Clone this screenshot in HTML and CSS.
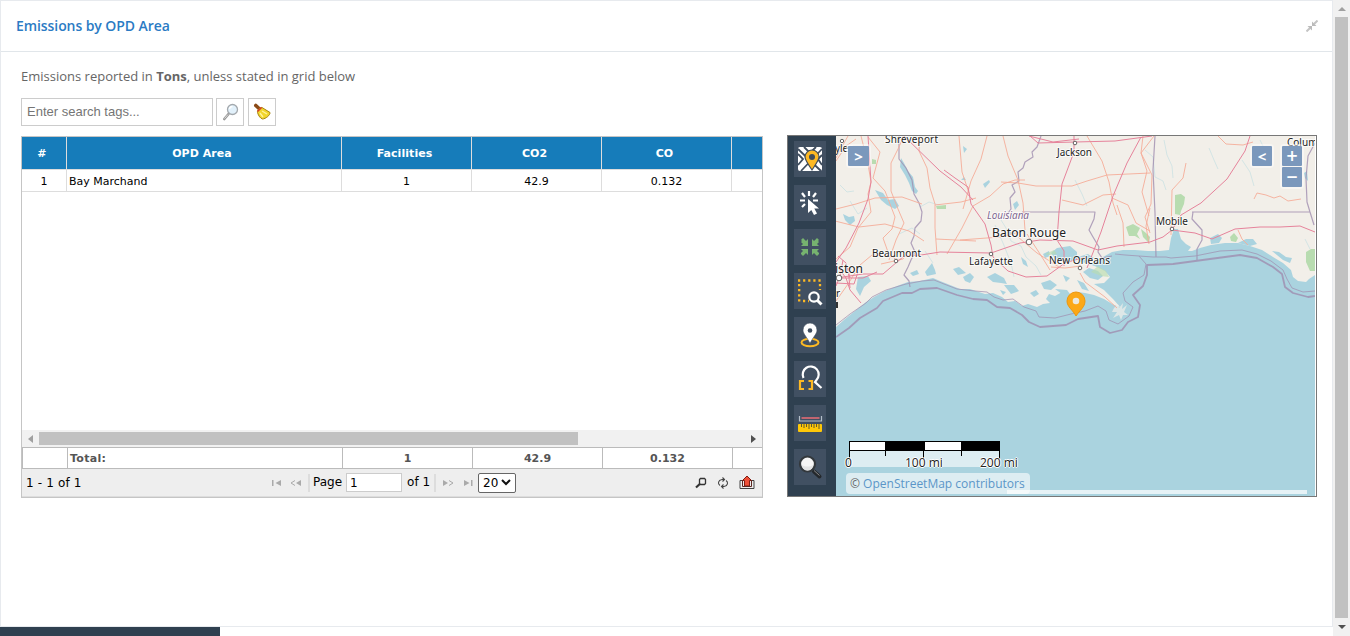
FILE: index.html
```html
<!DOCTYPE html>
<html lang="en">
<head>
<meta charset="utf-8">
<title>Emissions by OPD Area</title>
<link rel="stylesheet" href="styles.css">
</head>
<body>
<div class="app">
  <div class="main">
    <section class="panel">
      <header class="panel-head">
        <h1 class="panel-title">Emissions by OPD Area</h1>
        <svg class="collapse" width="12" height="12" viewBox="0 0 12 12"><path d="M0.500 11.500 4 8M11.500 .5 8 4" stroke="#c4c4c4" stroke-width="2"/><path d="M1.500 6H6v4.500zM10.500 6H6V1.500z" fill="#bbb"/></svg>
      </header>
      <div class="panel-body">
        <div class="left">
          <p class="note">Emissions reported in <b>Tons</b>, unless stated in grid below</p>
          <div class="search">
            <input class="search-input" placeholder="Enter search tags...">
            <button class="tool find"><svg width="18" height="18" viewBox="0 0 18 18"><path d="M3.300 16 7.500 11" stroke="#999" stroke-width="2.600" stroke-linecap="round"/><path d="M3.500 15.500 7 11.500" stroke="#ddd" stroke-width="1"/><circle cx="11.500" cy="6.500" r="5" fill="#e2f1fb" stroke="#a4a9ae" stroke-width="1.300"/><path d="M8.500 6a3 3 0 0 1 3-2.500" stroke="#fff" stroke-width="1.500" fill="none"/></svg></button>
            <button class="tool"><svg width="18" height="18" viewBox="0 0 18 18"><path d="M2.800 2.500 5.500 5" stroke="#8b4a16" stroke-width="3.600" stroke-linecap="round"/><path d="M4.500 9.500C4 7 7 4 9 4.500l8 5c.5 2.500-4.500 6.500-7.500 6.500-2-.5-4-3-5-6.500z" fill="#f1d52c" stroke="#a8850f"/><path d="M4.500 8.500 8.500 4.500" stroke="#d5382a" stroke-width="1.600"/><path d="M9 8 14 11M7 10l3 4" stroke="#fff19a" stroke-width="1.400"/></svg></button>
          </div>
          <div class="grid">
            <div class="row head"><span class="num">#</span><span class="area">OPD Area</span><span>Facilities</span><span>CO2</span><span>CO</span><span class="rest"></span></div>
            <div class="row data"><span class="num">1</span><span class="area">Bay Marchand</span><span>1</span><span>42.9</span><span>0.132</span><span class="rest"></span></div>
            <div class="space"></div>
            <div class="hscroll"><i class="arrow left-arrow"></i><i class="hthumb"></i><i class="arrow right-arrow"></i></div>
            <div class="row total"><span class="num"></span><span class="area">Total:</span><span>1</span><span>42.9</span><span>0.132</span><span class="rest"></span></div>
            <div class="pager">
              <span class="range">1 - 1 of 1</span>
              <div class="pages">
                <svg width="32" height="10" viewBox="0 0 32 10" fill="#aaa"><path d="M1 2h1.500v6H1zM10 2v6L4.500 5z"/><path d="M24 2.500 20 5l4 2.500" fill="none" stroke="#aaa"/><path d="M30 2v6l-5-3z"/></svg>
                <i class="sep"></i><span class="word">Page</span><input class="page-input" value="1"><span class="word">of 1</span><i class="sep sep-right"></i>
                <svg width="32" height="10" viewBox="0 0 32 10" fill="#aaa"><path d="M1 2v6l5-3z"/><path d="M7 2.500 11 5 7 7.500" fill="none" stroke="#aaa"/><path d="M22 2v6l5.500-3zM29 2h1.500v6H29z"/></svg>
                <span class="select">20<svg width="10" height="7" viewBox="0 0 10 7"><path d="m1 1 4 4 4-4" fill="none" stroke="#111" stroke-width="2"/></svg></span>
              </div>
              <div class="actions">
                <svg width="12" height="12" viewBox="0 0 12 12" fill="none" stroke="#333"><path d="M4.500 2.500 5.500 1.500h4l1 1v4L9.500 7.500h-4l-1-1z" stroke-width="1.300"/><path d="M1 10.500 4.800 7" stroke-width="2.200"/></svg>
                <svg width="12" height="12" viewBox="0 0 12 12" fill="none" stroke="#444" stroke-width="1.100"><path d="M3 8.500C.5 7 1 3 5 2.500h2M5.500.5l2 2-2 2M9 3.500C11.500 5 11 9 7 9.500H5M6.500 7.500l-2 2 2 2"/></svg>
                <svg width="16" height="16" viewBox="0 0 16 16"><path d="M4 5.500H1v8h14v-8h-3" fill="none" stroke="#444"/><path d="M8 1 3.500 5.500h2V11h5V5.500h2z" fill="#ee5038" stroke="#7f1c12"/><path d="M3.500 6v5.500h9V6" fill="none" stroke="#5a2620"/></svg>
              </div>
            </div>
          </div>
        </div>
        <div class="map-frame">
          <nav class="map-tools">
            <button><svg viewBox="0 0 32 36"><rect x="4" y="6" width="24" height="24" rx="2" fill="#fff"/><path d="M4 8 27 30M28 8 7 30M10 6l6 6 6-6M4 13l5 5-5 6M28 14l-4 4 4 6" stroke="#3f4d5e" stroke-width="1.800" fill="none"/><path d="M18 29c-4-6-7-10-7-13a7 7 0 0 1 14 0c0 3-3 7-7 13z" fill="#fdb924" stroke="#3f4d5e" stroke-width="1.200"/><circle cx="18" cy="16" r="3" fill="#3f4d5e"/></svg></button>
            <button><svg viewBox="0 0 32 36"><path d="M15 6v5M8 8l3 4M22 8l-3 4M6 15.500h5M19 15.500h5M8 22l3-3" stroke="#fff" stroke-width="2.200"/><path d="M14 14v14l3.300-3 2.700 5 3-1.500-2.700-5H25z" fill="#fff"/></svg></button>
            <button><svg viewBox="0 0 32 36" fill="#76b36f"><path d="M7 11l2-2 3 3 2-2v7H7l2-2-2-2 1-1zM25 11l-2-2-3 3-2-2v7h7l-2-2 2-2-1-1zM7 25l2 2 3-3 2 2v-6H7l2 2-2 2zM25 25l-2 2-3-3-2 2v-6h7l-2 2 2 2z"/></svg></button>
            <button><svg viewBox="0 0 32 36"><path d="M4 7.500h23M5.200 11v18M26 11v6M9 28h6" fill="none" stroke="#fdb924" stroke-width="2.300" stroke-dasharray="2.200 2.900"/><circle cx="20" cy="24" r="4.700" fill="none" stroke="#fff" stroke-width="2.200"/><path d="m23.500 27.500 4 4" stroke="#fff" stroke-width="3"/></svg></button>
            <button><svg viewBox="0 0 32 36"><ellipse cx="16" cy="25.500" rx="8.500" ry="3.700" fill="none" stroke="#fdb924" stroke-width="2"/><path d="M16 26.500C13 20 9 17 9 13a7 7 0 0 1 14 0c0 4-4 7-7 13.500z" fill="#fff" stroke="#3f4d5e" stroke-width=".6"/><circle cx="16" cy="13.500" r="2.300" fill="#3f4d5e"/></svg></button>
            <button><svg viewBox="0 0 32 36" fill="none"><path d="M9.500 17A8 8 0 1 1 22.500 19l-1.500 2 6.500 6" stroke="#fff" stroke-width="2.200"/><path d="M10 20H6v8h4M14.500 20H18v8h-3.500" stroke="#fdb924" stroke-width="2.200"/></svg></button>
            <button><svg viewBox="0 0 32 36"><path d="M5.500 11v5h22v-5" fill="none" stroke="#b4bec8" stroke-width="1.200"/><path d="M7.500 13h18" stroke="#ee6d76" stroke-width="1.500"/><rect x="4" y="19" width="24" height="8" rx="1" fill="#ffc808"/><path d="M7.500 19v3M10 19v4M12.500 19v3M15 19v5M17.500 19v3M20 19v4M22.500 19v3M25 19v5" stroke="#655a2e"/></svg></button>
            <button><svg viewBox="0 0 32 36"><path d="m20 22.500 5.500 5" stroke="#24282c" stroke-width="4" stroke-linecap="round"/><path d="m20 21.500 5.500 5" stroke="#888"/><circle cx="13.500" cy="15" r="7.500" fill="#f5f5f5" stroke="#33383c" stroke-width="2.200"/><path d="M8 16a5.500 5.500 0 0 0 11 0c-3 2-8 2-11 0z" fill="#e2e3e4"/></svg></button>
          </nav>
          <div class="map">
            <svg class="tiles" viewBox="836 136 479 360" width="479" height="360">
              <rect x="836" y="136" width="479" height="360" fill="#aad3df"/>
              <path class="land" d="M836 136H1315V275L1309 279 1306 282 1298 281 1293 277 1291 270 1283 263 1273 257 1262 250 1250 246 1238 243 1225 243 1211 245 1200 248 1192 251 1188 251 1191 247 1186 244 1181 239 1178 229 1174 229 1171 238 1169 250 1160 251 1148 251 1135 250 1123 250 1112 252 1103 257 1096 260 1089 264 1097 267 1105 271 1110 277 1104 283 1094 284 1104 290 1113 299 1120 307 1114 305 1104 299 1094 295 1085 293 1078 292 1070 294 1062 292 1055 296 1049 294 1046 299 1050 303 1043 304 1037 307 1028 304 1022 306 1015 301 1008 302 1002 297 993 293 985 294 979 292 970 289 960 289 950 285 940 281 933 278 920 281 908 282 897 286 885 291 874 297 866 302 855 311 845 319 836 327z"/>
              <path d="M1114 308l4-4 1 4 4-5-1 6 5-4-3 7 4 3-5 0-2 5-2-5-6 3 4-6-5 0z" fill="#f2efe9" opacity=".7"/>
              <!-- bays, lakes and wetlands -->
              <g fill="#aad3df">
                <path d="m1051 253 6-5 13-2 7 6 0 7-9 3-12-2zM1043 254l6-3 1 5-5 2zM1078 257l10-3 6 4-8 5-8-1zM1083 272l6-4 9 3 5 5-5 4-8-2zM858 277l10-1 3 5-7 6-4 9-4-7zM925 272l7-9 3 7 1 4-9 2zM910 273l7-3 2 4-6 2zM953 269l6-2 7 6-8 2zM963 277l7-4 4 4-4 6-5-2zM987 277l8-4 9 5 3 6-6-1-8-1zM1004 285l10 0 5 6-8 3zM1041 283l9-3 7 5-6 5-7-1zM1055 289l12 1 3 4-8 0zM1077 280l7 3 5 8-7-2zM875 190l8 3 5 7 7-1 4 7-4 3-8-4-6-5zM843 214l6 3 5-1 1 5-5 4-5-5zM901 158l3 5 4 8 5 6 2 10 3 4-2 3-4-3-3-8-4-8-5-8zM1210 238l8-4 4 4-3 5-8 1zM1238 243l8-4 7 0 4 5-7 2zM1272 251l7 1 7 5 6 1-2 5-7-3zM1013 204l4-3 2 4-4 5zM983 184l6-4 1 2-5 6z"/>
                <path d="m963 146 4 3-3 4zM1008 229l4 4-3 3zM961 180l3-3 2 3zM1021 257l5 4 2 6-5-3zM1304 173l3-2 1 10-3-3zM1063 275l7 3-4 4zM1094 261l6 1-3 5zM1030 293l6-3 3 4-5 3zM1000 290l6 2-3 3z"/>
              </g>
              <g fill="#b8dcb0">
                <path d="m1175 195 6-1 4 3-1 7-3 7-1 4-5-1zM1126 227l7-3 7 4-3 6 3 5-5-3-6 0zM1306 252l5-3h4v22h-5l-4-9zM1230 237l4-4 4 5-2 4-5-1zM1141 229l5 4 4 4-1 6-6-6zM872 159l4 1v4h-4zM936 206l10-1 0 4-9 0z"/>
                <path d="m1045 254 9-4 3 4-9 1zM1091 272l7-6 8 5 3 6-8-1z" opacity=".65"/>
              </g>
              <g class="stream">
                <path d="M1001 220l5 8 5 13 10 5 5 11 10 9 5 9M995 225l8 18 8 20 3 14M1145 150l8 7 2 20 8 4 3 9M1164 140l3 15 5 11 1 12M1242 160l8 12 4 14M1075 180l7 14 5 12M840 185l7 7 7-1M850 201l8 13 9-6M920 207l9-5 10 3M899 234l13-6 8 6M925 251l8 12M1305 239l5 10M1260 140l6 12 1 12M1209 148l5 12 4 9"/>
              </g>
              <g class="border">
                <path d="M899 136V159L906 168 912 180 914 194 919 203 922 212 921 221 915 228 914 236 911 243 915 252 911 260 908 267 904 275 909 281 910 287M1041 136L1037 147 1032 152 1033 157 1025 162 1023 168 1018 172 1019 181 1012 185 1015 192 1010 198 1011 209 1006 216M1022 212H1095L1094 219 1089 230 1093 237 1099 247 1098 252 1102 258 1112 256M1155 136L1153 170 1155 213 1156 257M1192 212H1310L1314 225M1193 212L1192 219 1202 230 1202 240 1197 249 1197 261M1315 143L1308 156 1306 178 1307 202 1310 212"/>
                <path d="M836 325L850 314 866 303 872 297 886 290 906 284 922 281 934 280 944 284 957 289 975 291 987 292 994 297 1003 300 1013 299 1024 307 1036 311 1039 317 1055 318 1071 314 1085 311 1098 306 1106 311 1109 320 1118 324 1129 316 1133 307 1125 301 1123 293 1133 282 1144 275 1146 264 1139 256 1125 255 1115 254M1139 256L1153 257 1166 257 1171 258 1195 256 1220 251 1242 250 1257 254 1271 261 1283 270 1287 279 1292 288 1303 292 1315 291" stroke-width=".9"/>
                <path class="maritime" d="M836 337L849 328 860 318 877 308 883 301 902 293 912 293 920 289 937 288 957 295 973 299 987 300 997 307 1010 308 1022 315 1029 322 1040 327 1066 325 1078 319 1098 316 1100 327 1110 333 1122 330 1128 322 1138 317 1140 305 1133 295 1143 286 1147 275 1147 265 1173 264 1210 259 1240 255 1257 258 1273 267 1282 274 1285 287 1293 293 1308 297 1315 296"/>
              </g>
              <g class="road orange">
                <path d="M848 136l-9 16-3 6M836 161l10-15 10-7M861 136l7 28 3 18-3 12 3 18-13 16-8 19-14 12M868 137l12 15-7 26 12 13 10 26-3 12-9 9 5 14 9 9M904 136l-6 13-7 14 0 28 7 18 6 14-8 17-7 20M920 136l-1 15 8 17 3 20 5 16 0 24 2 27M836 209l20-5 19-6 27-1 20 7M835 221l24 6 26-3 24 7 15 10M935 205l26-3 15-4M936 239l40 2M947 254l15-26 11-22 17-10 13-12 12-4 10 0M970 196l-8-24-3-36M987 136l-6 23-10 22-4 14-4 14M1003 136l5 20 10 24 5 23 2 27M1001 182l17 1 18 3 36 0 15-5 20-6 43-2M1062 200l21 5 20-10 13-1M1087 136l15 25 7 21 4 21 4 12M1112 198l16 7 8 18 14 8M1117 205l6 18 1 24M1143 136l-2 17 6 18-5 21 7 24M1154 136l-13 17 11 22-1 29-6 13 5 16M1150 208l-4 18 3 18M1171 235l1-45 11-12 3-15M1218 136l8 8 17 1 10-3M1254 199l3-6 9 2 8 3 6-2 8 5 13-2M1238 230l4 9 6 6"/>
                <path d="M836 301l12-17 12-19 12-10 23 2M881 264l22-5 5-7M960 240l40-3 20-5M1018 237l19 16 22 14M1027 234l13 20 10 16M1080 273l5 9 20 15 12 11M1051 267l14 1 16-2"/>
              </g>
              <g class="road">
                <path d="M868 136l3 46-3 17-9 24-13 25-10 14M836 278L863 274 883 274 904 256 921 255 940 252 991 253 1020 243 1040 240 1073 241 1098 250 1117 246 1150 242 1163 237 1172 230 1195 233 1212 239 1235 229 1260 227 1280 227 1300 226 1315 232M944 170l11 8 13 9 3 17 14 20 6 21 2 12 15 14 18 6 21-1 18-13 20-6M904 136l36 35 21 16 12 13M1030 136l8 7 37-1 40-1 37-5M1074 136l0 16-12 32-3 28-2 28 7 11 0 15M1141 137L1127 163 1113 196 1101 232 1087 268M1250 136L1245 151 1227 179 1201 203 1181 215 1172 230M1029 136l24 6 26-3"/>
                <path d="M836 265l10 13 4 12 11 13M843 260l-3 16-4 10M841 278l22 0 14-6M850 278l-4-15-8-7M836 283l18 1 4-12M848 268l2 20"/>
              </g>
              <g class="place">
                <circle cx="842" cy="141" r="1.700"/><circle cx="1075" cy="143" r="1.800"/><circle cx="896" cy="261" r="1.800"/><circle cx="839" cy="278" r="2.800"/><circle cx="991" cy="254" r="1.800"/><circle cx="1029" cy="242" r="2.800"/><circle cx="1080" cy="268" r="1.800"/><circle cx="1172" cy="229" r="1.800"/>
              </g>
              <g class="label">
                <text x="835" y="152" textLength="17">yler</text><text x="885" y="143" textLength="53">Shreveport</text><text x="1057" y="156" textLength="35">Jackson</text><text x="1287" y="146">Columbus</text><text x="872" y="257" textLength="49">Beaumont</text><text x="969" y="265" textLength="44">Lafayette</text><text x="1049" y="264" textLength="61">New Orleans</text><text x="1156" y="225" textLength="32">Mobile</text>
                <g class="city"><text x="835" y="273" textLength="28">iston</text><text x="992" y="237" textLength="74">Baton Rouge</text></g>
                <text x="836" y="297">r</text><text class="state" x="987" y="219" textLength="42">Louisiana</text>
              </g>
              <path d="M836 302h2v6h-2z" fill="#333"/>
              <path d="M1076 316c-3-6-9-9-9-15a9 9 0 0 1 18 0c0 6-5 9-9 15z" fill="#fca817" stroke="#ee970e"/>
              <circle cx="1076" cy="301" r="3.300" fill="#ece9df"/>
            </svg>
            <span class="ctl ctl-open"><b>&gt;</b></span>
            <span class="ctl ctl-close"><b>&lt;</b></span>
            <span class="ctl ctl-zoom"><b>+</b><b>−</b></span>
            <div class="scale">
              <svg width="170" height="30" viewBox="0 0 170 30"><path d="M0 10h151v16H0z" fill="#fff" opacity=".6"/><path d="M0 0h151v10H0z"/><path d="M1 1h35v8H1zM76 1h36v8H76z" fill="#fff"/><path d="M.5 9v9M36.500 9v6M74.500 9v9M112.500 9v6M150.500 9v9" stroke="#000"/></svg>
              <span class="t0">0</span><span class="t1">100 mi</span><span class="t2">200 mi</span>
            </div>
            <div class="attribution">© <a>OpenStreetMap contributors</a></div>
            <i class="progress"></i>
          </div>
        </div>
      </div>
    </section>
    <div class="footer-bar"></div>
  </div>
  <div class="vscroll"><i class="up"></i><i class="vthumb"></i><i class="down"></i></div>
</div>
</body>
</html>
```
FILE: styles.css
```css
* { box-sizing: border-box; }
body { margin: 0; overflow: hidden; background: #fff; color: #666; font: 13px "Open Sans", sans-serif; }
button, input { margin: 0; padding: 0; border-radius: 0; outline: 0; }
svg { display: block; flex: none; }
.app { display: flex; width: 1350px; height: 636px; }
.main { width: 1333px; }
.panel { height: 627px; border: 1px solid #e7eaee; }
.panel-head { height: 51px; padding: 0 15px; border-bottom: 1px solid #e1e6ea; display: flex; align-items: center; justify-content: space-between; }
.panel-title { margin: 0; color: #2b7bc4; font-size: 14px; font-weight: 600; line-height: 20px; letter-spacing: -.08px; }
.collapse { margin-right: -1px; }
.panel-body { display: flex; justify-content: space-between; padding: 0 15px 0 20px; }
.left { width: 742px; }
.note { margin: 14px 0 11px; line-height: 21px; white-space: nowrap; }
.search { display: flex; }
.search-input { width: 192px; height: 28px; border: 1px solid #ccc; padding: 0 5px 2px; font: 13px "Liberation Sans", sans-serif; color: #777; }
.search-input::placeholder { color: #757575; opacity: 1; }
.tool { width: 28px; height: 28px; border: 1px solid #ccc; background: #fff; margin-left: 4px; padding: 4px; }
.find { margin-left: 3px; }
.grid { width: 742px; height: 362px; margin-top: 10px; border: 1px solid #c5c5c5; font: 11px Verdana, "DejaVu Sans", sans-serif; color: #000; display: flex; flex-direction: column; overflow: hidden; }
.row { display: flex; flex: none; text-align: center; }
.row span { width: 130px; flex: none; border-right: 1px solid #ddd; }
.row .num { width: 45px; }
.row .area { width: 275px; }
.row .rest { flex: 1; border: 0; }
.head { height: 32px; line-height: 34px; background: #167cba; color: #fff; font-weight: bold; letter-spacing: .05px; }
.head span { padding-right: 4px; }
.data { height: 23px; line-height: 23px; border-bottom: 1px solid #ddd; border-top: 1px solid #ddd; }
.data .area { text-align: left; padding-left: 2px; }
.space { flex: 1; }
.hscroll { display: flex; align-items: center; height: 17px; background: #f1f1f1; }
.arrow { width: 17px; display: flex; justify-content: center; }
.arrow::after { content: ""; border: 4px solid transparent; }
.left-arrow::after { border-right-color: #a0a0a0; border-left: 0; border-right-width: 5px; }
.right-arrow { margin-left: auto; }
.right-arrow::after { border-left-color: #505050; border-right: 0; border-left-width: 5px; }
.hthumb { width: 539px; height: 13px; background: #c1c1c1; }
.total { height: 22px; line-height: 21px; border-top: 1px solid #bbb; border-bottom: 1px solid #bbb; font-weight: bold; color: #555; }
.total span { border-color: #bbb; }
.total .num { width: 46px; border-left: 1px solid #bbb; }
.total .area { text-align: left; padding-left: 2px; letter-spacing: .3px; }
.pager { height: 28px; flex: none; display: flex; align-items: center; background: #eee; border-bottom: 1px solid #ddd; font-size: 12px; padding: 0 8px 0 4px; }
.range { width: 245px; letter-spacing: .15px; }
.pages { display: flex; align-items: center; }
.word { padding-bottom: 1px; }
.sep { width: 2px; height: 18px; background: #ddd; margin: 0 3px 0 5px; }
.sep-right { margin: 0 6px 0 4px; }
.page-input { width: 56px; height: 19px; border: 1px solid #ccc; margin: 0 5px 0 4px; padding: 0 3px; font: inherit; }
.select { width: 38px; height: 20px; margin-left: 4px; padding: 0 4px; border: 1px solid #666; border-radius: 2px; background: #fff; display: flex; align-items: center; justify-content: space-between; }
.actions { display: flex; align-items: center; gap: 10px; margin: 1px -1px 0 auto; }
.map-frame { width: 530px; height: 362px; margin-top: 83px; border: 1px solid #777; display: flex; }
.map-tools { width: 48px; flex: none; background: #2f4050; display: flex; flex-direction: column; gap: 8px; padding: 5px 6px; }
.map-tools button { width: 32px; height: 36px; border: 0; background: #415062; }
.map-tools svg { width: 32px; height: 36px; }
.map { position: relative; width: 479px; height: 360px; overflow: hidden; }
.land { fill: #f2efe9; }
.stream { fill: none; stroke: #c6dfe3; stroke-width: .7; }
.border { fill: none; stroke: #a08eb0; stroke-width: 1.2; opacity: .8; stroke-linejoin: round; }
.maritime { stroke-width: 1.8; }
.road { fill: none; stroke: #e6839b; stroke-width: 1; stroke-linejoin: round; }
.orange { stroke: #f5ad98; stroke-width: .9; }
.place { fill: #fff; stroke: #555; stroke-width: .9; }
.label { font: 10px "Noto Sans", sans-serif; fill: #222; stroke: #fff; stroke-opacity: .7; stroke-width: 2px; paint-order: stroke; }
.city { font-size: 12px; }
.state { font-style: italic; fill: #80668f; }
.ctl { position: absolute; top: 8px; padding: 2px; border-radius: 4px; background: rgba(255,255,255,.45); }
.ctl b { display: block; width: 20px; height: 20px; margin-bottom: 1px; background: #7b98bc; color: #fff; font: bold 15px/20px "DejaVu Sans", sans-serif; text-align: center; border-radius: 1px; }
.ctl b:last-child { margin-bottom: 0; }
.ctl-open { left: 10px; }
.ctl-open b { width: 21px; }
.ctl-close { left: 414px; }
.ctl-open b, .ctl-close b { font: bold 15px/20px "Open Sans", sans-serif; }
.ctl-zoom { left: 444px; }
.scale { position: absolute; left: 13px; top: 305px; font-size: 12px; line-height: 16px; color: #222; text-shadow: 1px 0 #fff, -1px 0 #fff, 0 1px #fff, 0 -1px #fff; }
.scale span { position: absolute; top: 14px; white-space: nowrap; }
.t0 { left: -4px; }
.t1 { left: 56px; }
.t2 { left: 131px; }
.attribution { position: absolute; left: 10px; top: 337px; width: 184px; height: 21px; padding-left: 4px; border-radius: 4px; background: rgba(255,255,255,.6); font-size: 12px; line-height: 21px; white-space: nowrap; }
.attribution a { color: #5b96c8; }
.progress { position: absolute; left: 171px; top: 354px; width: 300px; height: 4px; background: rgba(255,255,255,.7); }
.footer-bar { width: 220px; height: 9px; background: #2f4050; }
.vscroll { width: 17px; background: #f1f1f1; display: flex; flex-direction: column; align-items: center; }
.up, .down { border: 4px solid transparent; }
.up { border-top: 0; border-bottom-color: #a0a0a0; margin: 7px 0 6px; }
.vthumb { width: 13px; height: 601px; background: #c1c1c1; }
.down { border-bottom: 0; border-top-color: #505050; margin-top: 7px; }
```
